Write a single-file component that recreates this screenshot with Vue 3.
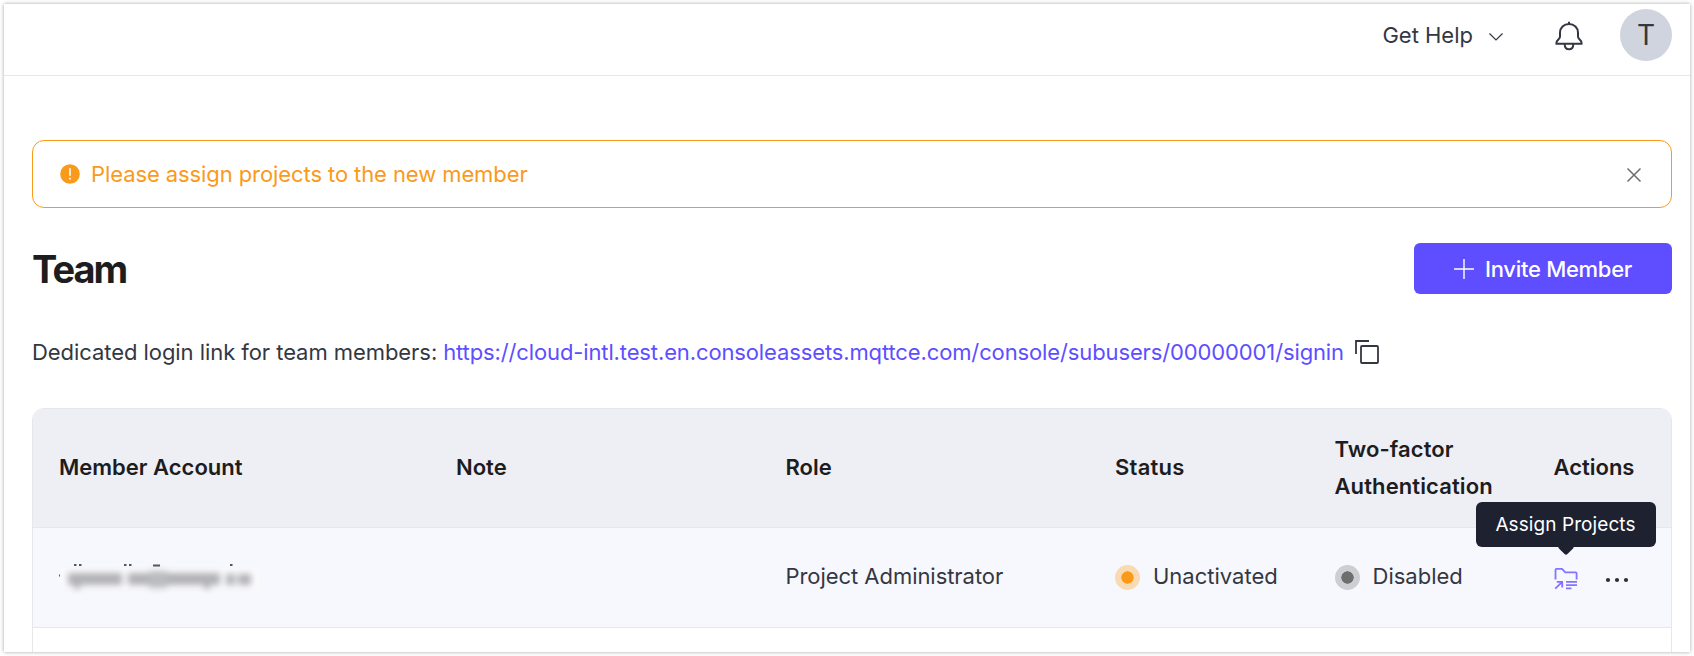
<template>
  <div class="console">
    <div class="panel">
      <header class="topbar">
        <a class="help">
          <span class="help-text">Get Help</span>
          <svg class="chevron" width="16" height="10" viewBox="0 0 16 10">
            <path d="M1.5 1.5 L8 8 L14.5 1.5" />
          </svg>
        </a>
        <svg class="bell" width="28" height="30" viewBox="0 0 28 30">
          <path d="M14 .8 V3" />
          <path d="M14 3 C8.8 3 5 6.8 5 11.5 V15.5 C5 18.3 1.5 19.2 1.5 21.6 V22.8 H26.5 V21.6 C26.5 19.2 23 18.3 23 15.5 V11.5 C23 6.8 19.2 3 14 3 Z" />
          <path d="M9.7 23 C9.7 26.3 11.4 28.3 14 28.3 C16.6 28.3 18.3 26.3 18.3 23" />
        </svg>
        <div class="avatar">T</div>
      </header>

      <main class="content">
        <!-- Notice -->
        <div v-if="showNotice" class="notice">
          <svg class="notice-icon" width="20" height="20" viewBox="0 0 20 20">
            <circle cx="10" cy="10" r="9.8" />
            <path d="M10 4.2 V11.8" />
            <path d="M10 13.8 V15.6" />
          </svg>
          <span class="notice-text">Please assign projects to the new member</span>
          <svg class="notice-close" width="16" height="16" viewBox="0 0 16 16" @click="showNotice = false">
            <path d="M1.5 1.5 L14.5 14.5 M14.5 1.5 L1.5 14.5" />
          </svg>
        </div>

        <div class="title-row">
          <h1>Team</h1>
          <button class="invite">
            <svg width="20" height="20" viewBox="0 0 20 20">
              <path d="M10 0 V20 M0 10 H20" />
            </svg>
            <span class="invite-text">Invite Member</span>
          </button>
        </div>

        <!-- Login link -->
        <div class="login-link">
          <span class="login-label">Dedicated login link for team members:</span>
          <a class="login-url">{{ loginUrl }}</a>
          <svg class="copy" width="24" height="24" viewBox="0 0 24 24">
            <path d="M1 14 V1 H14" />
            <rect x="6" y="6" width="17" height="17" rx="1" />
          </svg>
        </div>

        <!-- Members -->
        <div class="table">
          <div class="row head">
            <div v-for="column in columns" :key="column.key" class="cell">
              <span :class="['label', column.key]">{{ column.label }}</span>
            </div>
          </div>
          <div v-for="member in members" :key="member.id" class="row">
            <div class="cell">
              <svg class="masked" width="200" height="34" viewBox="0 0 200 34">
                <rect class="mask-bg" x="2" y="8" width="198" height="21" />
                <g class="smudge">
                  <rect x="9" y="13" width="54" height="12" />
                  <rect x="15" y="22" width="6" height="7" />
                  <rect x="69" y="13" width="92" height="12" />
                  <rect class="dense" x="90" y="11" width="18" height="17" />
                  <rect x="145" y="22" width="6" height="7" />
                  <rect x="167" y="14" width="9" height="11" />
                  <rect x="179" y="14" width="13" height="11" />
                </g>
                <path class="ticks" d="M15 5 h2.5 M20 5 h2.5 M65 5 h2.5 M70 5 h2.5 M94 5.5 h7 M171 5 h2.5 M0 15.5 h1" />
              </svg>
            </div>
            <div class="cell">{{ member.note }}</div>
            <div class="cell"><span class="value role">{{ member.role }}</span></div>
            <div class="cell">
              <i class="dot warning"></i>
              <span class="value">{{ member.status }}</span>
            </div>
            <div class="cell">
              <i class="dot info"></i>
              <span class="value">{{ member.twoFactor }}</span>
            </div>
            <div class="cell actions">
              <div class="assign">
                <svg width="24" height="22" viewBox="0 0 24 22">
                  <path d="M1.5 11.5 V1.9 Q1.5 .9 2.5 .9 H8 L11.3 4.3 H21.6 Q22.6 4.3 22.6 5.3 V11.5" />
                  <path d="M1.2 20.6 L8 14.2 M2.8 13.9 H8.2 V19.6" />
                  <path d="M12 13.9 H23 M12 17.1 H23 M12 20.4 H17.5" />
                </svg>
                <div class="tooltip"><span class="tooltip-text">Assign Projects</span></div>
              </div>
              <svg class="more" width="24" height="6" viewBox="0 0 24 6">
                <circle cx="3" cy="3" r="2.1" />
                <circle cx="12" cy="3" r="2.1" />
                <circle cx="21" cy="3" r="2.1" />
              </svg>
            </div>
          </div>
        </div>
      </main>
    </div>
  </div>
</template>

<script setup>
import { ref } from 'vue'

const showNotice = ref(true)
const loginUrl = 'https://cloud-intl.test.en.consoleassets.mqttce.com/console/subusers/00000001/signin'

const columns = [
  { key: 'account', label: 'Member Account' },
  { key: 'note', label: 'Note' },
  { key: 'role-head', label: 'Role' },
  { key: 'status-head', label: 'Status' },
  { key: 'two-factor', label: 'Two-factor Authentication' },
  { key: 'actions-head', label: 'Actions' }
]

const members = ref([
  { id: 1, note: '', role: 'Project Administrator', status: 'Unactivated', twoFactor: 'Disabled' }
])
</script>

<style>
body {
  margin: 0;
  background: #fff;
}
</style>

<style scoped>
.console {
  box-sizing: border-box;
  height: 656px;
  padding: 4px;
  overflow: hidden;
  font-family: Inter, "Liberation Sans", sans-serif;
  font-size: 22px;
  color: #343741;
}

.panel {
  height: 648px;
  overflow: hidden;
  background: #fff;
  box-shadow: 0 0 4px rgba(0, 0, 0, 0.35);
}

span, a {
  white-space: nowrap;
}

svg {
  display: block;
  flex: none;
  fill: none;
}

.topbar {
  box-sizing: border-box;
  display: flex;
  align-items: center;
  justify-content: flex-end;
  height: 72px;
  padding: 0 18px 10px 0;
  border-bottom: 1px solid #e6e7ea;
}

.help {
  display: flex;
  align-items: center;
  gap: 15px;
  margin-right: 51px;
}

.help-text {
  line-height: 30px;
  padding-top: 1px;
}

.chevron {
  margin-top: 4px;
  stroke: #343741;
  stroke-width: 1.2;
}

.bell {
  margin: 3px 37px 0 0;
  stroke: #343741;
  stroke-width: 2;
}

.avatar {
  width: 52px;
  height: 52px;
  border-radius: 50%;
  background: #d0d4de;
  font-size: 28px;
  line-height: 53px;
  text-align: center;
}

.content {
  padding: 64px 18px 0 28px;
}

.notice {
  box-sizing: border-box;
  display: flex;
  align-items: center;
  height: 68px;
  padding: 0 29px 0 27px;
  border: 1px solid #fa9a1b;
  border-radius: 12px;
  color: #fa9a1b;
}

.notice-icon {
  margin-top: -1px;
}

.notice-icon circle {
  fill: #fa9a1b;
}

.notice-icon path {
  stroke: #fff;
  stroke-width: 1.6;
}

.notice-text {
  margin: -1px 0 0 11px;
  letter-spacing: -0.09px;
}

.notice-close {
  margin: 2px 0 0 auto;
  stroke: #6b6d72;
  stroke-width: 1.5;
}

.title-row {
  display: flex;
  align-items: center;
  justify-content: space-between;
  height: 51px;
  margin-top: 35px;
}

h1 {
  margin: 1px 0 0;
  font-size: 38px;
  line-height: 46px;
  font-weight: 700;
  letter-spacing: -2px;
  color: #1d1d1f;
}

.invite {
  box-sizing: border-box;
  display: flex;
  align-items: center;
  width: 258px;
  height: 51px;
  padding: 0 0 0 40px;
  gap: 11px;
  border: none;
  border-radius: 6px;
  background: #5e4eff;
  color: #fff;
  font-family: inherit;
  font-size: 22px;
  font-weight: 500;
}

.invite-text {
  letter-spacing: -0.28px;
}

.invite svg {
  stroke: #fff;
  stroke-width: 1.4;
}

.login-link {
  display: flex;
  align-items: center;
  height: 32px;
  margin-top: 42px;
}

.login-label {
  letter-spacing: -0.06px;
}

.login-url {
  margin-left: 6px;
  color: #5e4eff;
  letter-spacing: -0.125px;
}

.copy {
  margin-left: 11px;
  stroke: #343741;
  stroke-width: 1.8;
}

.table {
  margin-top: 40px;
  border: 1px solid #e6e7ea;
  border-radius: 12px 12px 0 0;
  height: 300px;
}

.row {
  box-sizing: border-box;
  display: grid;
  grid-template-columns: 397px 329.5px 329.5px 219.5px 219px 1fr;
  height: 100px;
  background: #f7f8fd;
  border-bottom: 1px solid #e6e7ea;
}

.head {
  height: 119px;
  border-radius: 11px 11px 0 0;
  background: #eeeff5;
  color: #1d1d1f;
  font-weight: 600;
}

.cell {
  display: flex;
  align-items: center;
  min-width: 0;
  padding-left: 26px;
}

.label {
  margin-top: -1px;
  line-height: 37px;
}

.status-head {
  letter-spacing: 0.25px;
}

.two-factor {
  width: 170px;
  white-space: normal;
  letter-spacing: 0.1px;
}

.value {
  margin-top: -3px;
}

.role {
  letter-spacing: -0.05px;
}

.masked {
  margin-top: -2px;
}

.mask-bg {
  fill: #fafafd;
}

.smudge {
  fill: #77787c;
  opacity: 0.55;
  filter: blur(3px);
}

.smudge .dense {
  fill: #88898d;
}

.ticks {
  stroke: #55565b;
  stroke-width: 2;
}

.dot {
  box-sizing: border-box;
  flex: none;
  width: 25px;
  height: 25px;
  margin: -1px 13px 0 0;
  border: 6px solid;
  border-radius: 50%;
}

.dot.warning {
  background: #fa9a1b;
  border-color: #f8dab5;
  background-clip: padding-box;
}

.dot.info {
  background: #6e6e6e;
  border-color: #cdced3;
  background-clip: padding-box;
}

.assign {
  position: relative;
  margin-top: 3px;
}

.assign svg {
  stroke: #8274ff;
  stroke-width: 1.8;
}

.tooltip {
  position: absolute;
  left: 50%;
  bottom: 43px;
  box-sizing: border-box;
  width: 180px;
  height: 45px;
  margin-left: -90px;
  border-radius: 6px;
  background: #1d2130;
  color: #fff;
  font-size: 19px;
  line-height: 45px;
  text-align: center;
}

.tooltip-text {
  letter-spacing: 0.08px;
}

.tooltip::after {
  content: '';
  position: absolute;
  left: 84px;
  bottom: -6px;
  width: 12px;
  height: 12px;
  border-radius: 2px;
  background: #1d2130;
  transform: rotate(45deg);
}

.more {
  margin: 4px 0 0 27px;
  fill: #2b2e38;
}
</style>
